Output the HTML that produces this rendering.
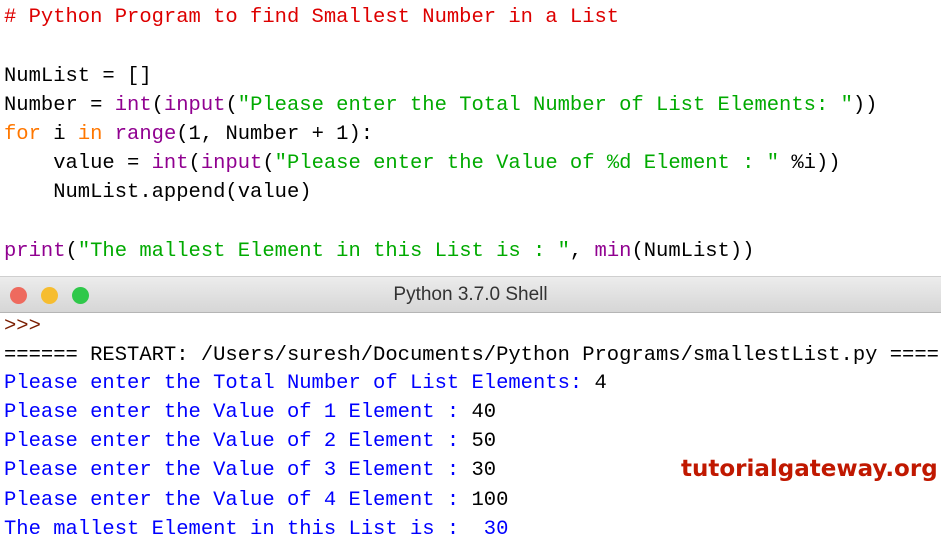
<!DOCTYPE html>
<html><head><style>
body{margin:0;width:941px;height:545px;overflow:hidden;background:#fff;position:relative;font-family:"Liberation Mono",monospace;font-size:20.5px;}
.l{position:absolute;left:4px;white-space:pre;line-height:29px;height:29px;}
.c{color:#dd0000}.s{color:#00aa00}.k{color:#ff7700}.b{color:#900090}.o{color:#0000ff}
#bar{position:absolute;left:0;top:276px;width:941px;height:35px;background:linear-gradient(#ececec,#d6d6d6);border-top:1px solid #cfcfcf;border-bottom:1px solid #b5b5b5;}
.d{position:absolute;top:10px;width:17px;height:17px;border-radius:50%;}
#t{position:absolute;left:0;width:941px;top:7px;text-align:center;font-family:"Liberation Sans",sans-serif;font-size:19px;color:#333;}
#wm{position:absolute;left:681px;top:456px;font-family:"DejaVu Sans",sans-serif;font-weight:bold;font-size:23px;color:#c01800;letter-spacing:0px;}
</style></head><body>
<div class="l c" style="top:3px"># Python Program to find Smallest Number in a List</div>
<div class="l" style="top:62px">NumList = []</div>
<div class="l" style="top:91px">Number = <span class="b">int</span>(<span class="b">input</span>(<span class="s">"Please enter the Total Number of List Elements: "</span>))</div>
<div class="l" style="top:120px"><span class="k">for</span> i <span class="k">in</span> <span class="b">range</span>(1, Number + 1):</div>
<div class="l" style="top:149px">    value = <span class="b">int</span>(<span class="b">input</span>(<span class="s">"Please enter the Value of %d Element : "</span> %i))</div>
<div class="l" style="top:178px">    NumList.append(value)</div>
<div class="l" style="top:237px"><span class="b">print</span>(<span class="s">"The mallest Element in this List is : "</span>, <span class="b">min</span>(NumList))</div>
<div id="bar"><div class="d" style="left:10px;background:#ee6a5e"></div><div class="d" style="left:41px;background:#f6bd30"></div><div class="d" style="left:72px;background:#2fc84a"></div><div id="t">Python 3.7.0 Shell</div></div>
<div class="l" style="top:312px;color:#7a1d00">&gt;&gt;&gt;</div>
<div class="l" style="top:341px">====== RESTART: /Users/suresh/Documents/Python Programs/smallestList.py ====</div>
<div class="l" style="top:369px"><span class="o">Please enter the Total Number of List Elements: </span>4</div>
<div class="l" style="top:398px"><span class="o">Please enter the Value of 1 Element : </span>40</div>
<div class="l" style="top:427px"><span class="o">Please enter the Value of 2 Element : </span>50</div>
<div class="l" style="top:456px"><span class="o">Please enter the Value of 3 Element : </span>30</div>
<div class="l" style="top:486px"><span class="o">Please enter the Value of 4 Element : </span>100</div>
<div class="l o" style="top:515px">The mallest Element in this List is :  30</div>
<div id="wm">tutorialgateway.org</div>
</body></html>
